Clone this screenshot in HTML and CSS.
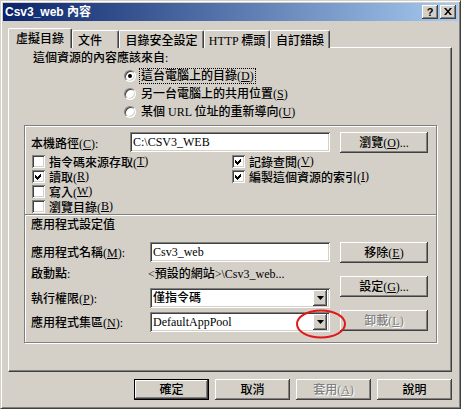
FILE: index.html
```html
<!DOCTYPE html>
<html>
<head>
<meta charset="utf-8">
<title>Csv3_web 內容</title>
<link rel="stylesheet" href="styles.css">
</head>
<body>
<div class="window">
  <div class="titlebar">
    <span class="title">Csv3_web 內容</span>
    <div class="tb-buttons">
      <span class="tb-btn tb-help">?</span>
      <span class="tb-btn"><svg width="8" height="7" viewBox="0 0 8 7"><path d="M0 0h2l2 2.5 2-2.5h2l-3 3.5 3 3.5h-2l-2-2.5-2 2.5h-2l3-3.5z"/></svg></span>
    </div>
  </div>
  <div class="tabs">
    <div class="tab tab-active">虛擬目錄</div>
    <div class="tab tab-doc">文件</div>
    <div class="tab tab-sec">目錄安全設定</div>
    <div class="tab tab-http">HTTP 標頭</div>
    <div class="tab tab-err">自訂錯誤</div>
  </div>
  <div class="panel">
    <div class="source-label">這個資源的內容應該來自:</div>
    <div class="radio-list">
      <div class="radio-row"><span class="radio radio-on"></span><span class="radio-text focus">這台電腦上的目錄(<u>D</u>)</span></div>
      <div class="radio-row"><span class="radio"></span><span class="radio-text">另一台電腦上的共用位置(<u>S</u>)</span></div>
      <div class="radio-row"><span class="radio"></span><span class="radio-text">某個 URL 位址的重新導向(<u>U</u>)</span></div>
    </div>
    <div class="group">
      <div class="path-row">
        <span class="path-label">本機路徑(<u>C</u>):</span>
        <div class="field path-field">C:\CSV3_WEB</div>
        <div class="btn side-btn">瀏覽(<u>O</u>)...</div>
      </div>
      <div class="checks">
        <div class="check-col">
          <div class="check-row"><span class="check"></span>指令碼來源存取(<u>T</u>)</div>
          <div class="check-row"><span class="check"><svg width="13" height="13" viewBox="0 0 13 13"><path d="M3 5l2 2 4-4v3l-4 4-2-2z"/></svg></span>讀取(<u>R</u>)</div>
          <div class="check-row"><span class="check"></span>寫入(<u>W</u>)</div>
          <div class="check-row"><span class="check"></span>瀏覽目錄(<u>B</u>)</div>
        </div>
        <div class="check-col">
          <div class="check-row"><span class="check"><svg width="13" height="13" viewBox="0 0 13 13"><path d="M3 5l2 2 4-4v3l-4 4-2-2z"/></svg></span>記錄查閱(<u>V</u>)</div>
          <div class="check-row"><span class="check"><svg width="13" height="13" viewBox="0 0 13 13"><path d="M3 5l2 2 4-4v3l-4 4-2-2z"/></svg></span>編製這個資源的索引(<u>I</u>)</div>
        </div>
      </div>
      <div class="separator"></div>
      <div class="section-title">應用程式設定值</div>
      <div class="app">
        <div class="app-fields">
          <div class="app-row"><span class="app-label">應用程式名稱(<u>M</u>):</span><div class="field app-field">Csv3_web</div></div>
          <div class="app-row app-row-text"><span class="app-label">啟動點:</span><span class="start-value">&lt;預設的網站&gt;\Csv3_web...</span></div>
          <div class="app-row app-row-perm"><span class="app-label">執行權限(<u>P</u>):</span><div class="field app-field combo"><span class="combo-text">僅指令碼</span><span class="combo-btn"><svg width="7" height="4" viewBox="0 0 7 4"><path d="M0 0h7l-3.5 4z"/></svg></span></div></div>
          <div class="app-row app-row-pool"><span class="app-label">應用程式集區(<u>N</u>):</span><div class="field app-field combo"><span class="combo-text">DefaultAppPool</span><span class="combo-btn"><svg width="7" height="4" viewBox="0 0 7 4"><path d="M0 0h7l-3.5 4z"/></svg></span></div></div>
        </div>
        <div class="app-buttons">
          <div class="btn side-btn">移除(<u>E</u>)</div>
          <div class="btn side-btn">設定(<u>G</u>)...</div>
          <div class="btn side-btn btn-disabled">卸載(<u>L</u>)</div>
        </div>
      </div>
    </div>
  </div>
  <div class="footer">
    <div class="btn foot-btn btn-default">確定</div>
    <div class="btn foot-btn">取消</div>
    <div class="btn foot-btn btn-disabled">套用(<u>A</u>)</div>
    <div class="btn foot-btn">說明</div>
  </div>
  <svg class="annotation" width="52" height="32" viewBox="0 0 52 32"><ellipse cx="25" cy="15" rx="24" ry="13.5" fill="none" stroke="#e01818" stroke-width="2"/></svg>
</div>
</body>
</html>
```

FILE: styles.css
```css
* { box-sizing: border-box; }
html, body { margin: 0; padding: 0; }
body {
  background: #d4d0c8;
  font-family: "Liberation Serif", "Noto Sans CJK TC", serif;
  font-size: 12px;
  font-weight: 500;
  color: #000;
}
u { text-decoration: underline; text-underline-offset: 1px; }

.window {
  position: relative;
  width: 461px;
  height: 409px;
  background: #d4d0c8;
  border: 1px solid;
  border-color: #d4d0c8 #404040 #404040 #d4d0c8;
  box-shadow: inset 1px 1px #fff, inset -1px -1px #808080;
  padding: 2px;
}

.titlebar {
  height: 18px;
  display: flex;
  align-items: center;
  justify-content: space-between;
  background: linear-gradient(to right, #0a246a, #a6caf0);
  padding: 0 2px 0 2px;
}
.title {
  color: #fff;
  font: bold 12px "Liberation Sans", "Noto Sans CJK TC", sans-serif;
  line-height: 18px;
}
.tb-buttons { display: flex; gap: 2px; }
.tb-btn {
  width: 16px;
  height: 14px;
  background: #d4d0c8;
  box-shadow: inset -1px -1px #404040, inset 1px 1px #fff, inset -2px -2px #808080;
  display: flex;
  align-items: center;
  justify-content: center;
  padding-bottom: 1px;
}
.tb-help { font: bold 11px "Liberation Sans", sans-serif; line-height: 12px; }

/* tabs */
.tabs {
  display: flex;
  align-items: flex-end;
  height: 20px;
  margin: 7px 0 -1px 5px;
}
.tab {
  height: 18px;
  line-height: 16px;
  padding-top: 2px;
  background: #d4d0c8;
  text-align: center;
  border-top: 1px solid #fff;
  border-left: 1px solid #fff;
  border-right: 1px solid #404040;
  box-shadow: inset -1px 0 #808080;
  border-radius: 2px 2px 0 0;
  white-space: nowrap;
}
.tab-active {
  position: relative;
  z-index: 1;
  height: 20px;
  line-height: 17px;
  width: 64px;
}
.tab-doc { width: 47px; text-align: left; padding-left: 5px; }
.tab-sec { width: 85px; }
.tab-http { width: 66px; }
.tab-err { width: 60px; }

/* panel */
.panel {
  height: 325px;
  margin: 0 6px 0 5px;
  border: 1px solid;
  border-color: #fff #404040 #404040 #fff;
  box-shadow: inset -1px -1px #808080;
}
.source-label {
  margin-top: 2px;
  padding-left: 24px;
  line-height: 16px;
  height: 16px;
}
.radio-list { margin-top: 1px; padding-left: 115px; }
.radio-row {
  height: 18px;
  display: flex;
  align-items: center;
}
.radio {
  width: 12px;
  height: 12px;
  border-radius: 50%;
  background: #fff;
  border: 1px solid;
  border-color: #808080 #fff #fff #808080;
  box-shadow: inset 1px 1px #404040, inset -1px -1px #d4d0c8;
  display: flex;
  align-items: center;
  justify-content: center;
  margin-right: 3px;
  flex: none;
}
.radio-on::after {
  content: "";
  width: 4px;
  height: 4px;
  border-radius: 50%;
  background: #000;
}
.radio-text {
  height: 16px;
  line-height: 14px;
  padding: 0 1px;
  border: 1px solid transparent;
}
.focus { border: 1px dotted #000; }

/* group */
.group {
  margin: 4px 0 0 15px;
  width: 413px;
  height: 218px;
  border: 1px solid #808080;
  box-shadow: inset 1px 1px #fff, 1px 1px #fff;
}
.path-row {
  margin-top: 6px;
  height: 21px;
  display: flex;
  align-items: center;
  padding-left: 6px;
}
.path-label { width: 99px; }
.field {
  height: 20px;
  background: #fff;
  box-shadow: inset 1px 1px #808080, inset -1px -1px #fff, inset 2px 2px #404040, inset -2px -2px #d4d0c8;
  padding: 0 3px;
  line-height: 20px;
  white-space: nowrap;
  overflow: hidden;
}
.path-field { width: 200px; align-self: flex-start; }

.btn {
  height: 21px;
  background: #d4d0c8;
  box-shadow: inset -1px -1px #404040, inset 1px 1px #fff, inset -2px -2px #808080;
  display: flex;
  align-items: center;
  justify-content: center;
  line-height: 14px;
  white-space: nowrap;
}
.side-btn { width: 88px; margin-left: 10px; flex: none; }
.btn-disabled { color: #808080; text-shadow: 1px 1px #fff; }

.checks { margin-top: 1px; padding-left: 7px; display: flex; }
.check-col { width: 200px; }
.check-row {
  height: 15px;
  display: flex;
  align-items: center;
  white-space: nowrap;
}
.check {
  width: 13px;
  height: 13px;
  flex: none;
  margin-right: 4px;
  background: #fff;
  box-shadow: inset 1px 1px #808080, inset -1px -1px #fff, inset 2px 2px #404040, inset -2px -2px #d4d0c8;
  display: flex;
}
.check svg { shape-rendering: crispEdges; }

.separator {
  height: 2px;
  border-top: 1px solid #808080;
  border-bottom: 1px solid #fff;
}
.section-title {
  margin-top: 1px;
  padding-left: 6px;
  height: 16px;
  line-height: 16px;
}

.app { display: flex; margin-top: 9px; padding-left: 6px; }
.app-fields { width: 299px; }
.app-row { display: flex; align-items: center; height: 20px; }
.app-label { width: 119px; flex: none; white-space: nowrap; }
.app-field { width: 180px; }
.app-row-text { margin-top: 3px; height: 16px; }
.start-value { margin-left: -2px; white-space: nowrap; }
.app-row-perm { margin-top: 7px; }
.app-row-pool { margin-top: 4px; }
.combo { display: flex; align-items: center; justify-content: space-between; padding: 2px 3px 2px 3px; line-height: 16px; }
.combo-btn {
  width: 14px;
  height: 16px;
  background: #d4d0c8;
  box-shadow: inset -1px -1px #404040, inset 1px 1px #fff, inset -2px -2px #808080;
  display: flex;
  align-items: center;
  justify-content: center;
  flex: none;
}
.app-buttons { display: flex; flex-direction: column; gap: 13px; }

/* footer */
.footer {
  margin: 7px 6px 0 0;
  display: flex;
  justify-content: flex-end;
  gap: 6px;
}
.foot-btn { width: 75px; }
.btn-default {
  border: 1px solid #000;
}

.annotation {
  position: absolute;
  left: 295px;
  top: 308px;
}
```
